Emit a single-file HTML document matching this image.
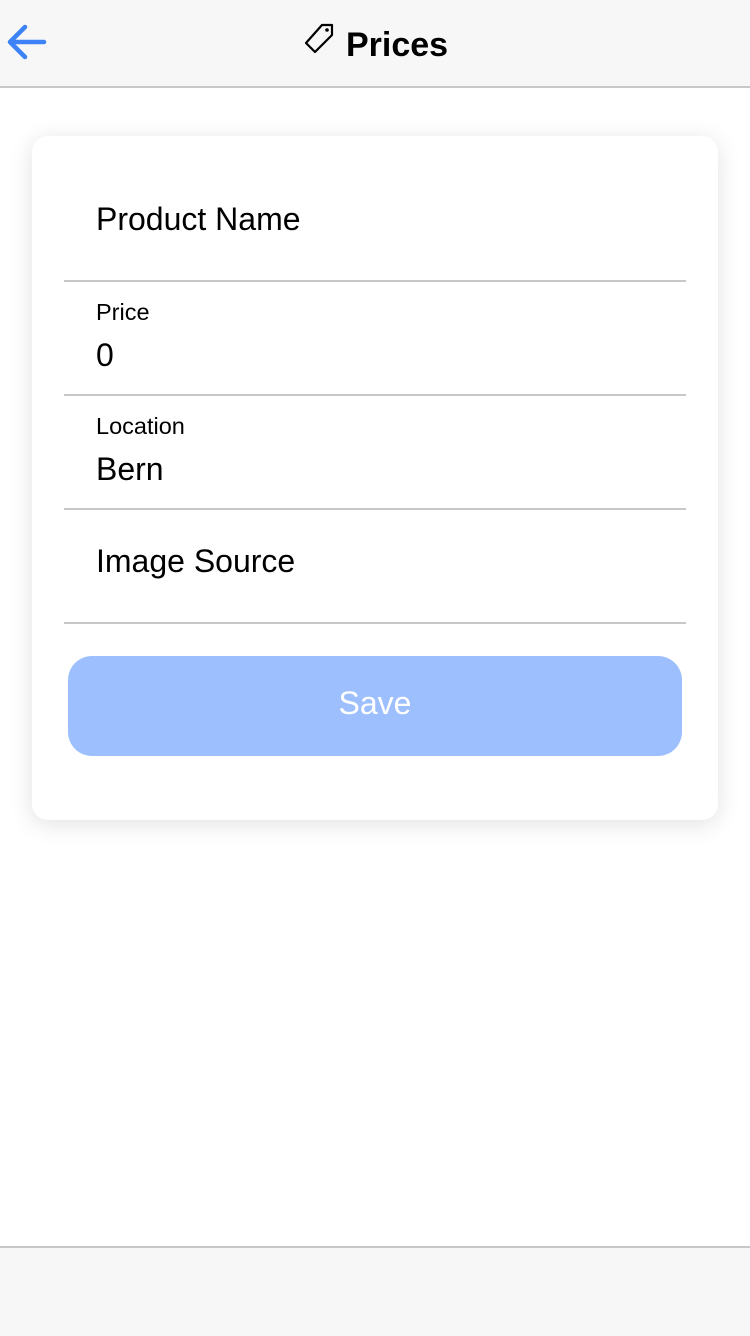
<!DOCTYPE html>
<html><head><style>
body{margin:0;width:750px;height:1334px;background:#fff;font-family:"Liberation Sans",sans-serif;position:relative;overflow:hidden}
.hdr{position:absolute;top:0;left:0;width:750px;height:86px;background:#f7f7f7;border-bottom:2px solid #c8c8c8}
.title{position:absolute;left:346px;top:26px;font-size:34px;font-weight:bold;color:#000}
.card{position:absolute;left:32px;top:136px;width:686px;height:684px;background:#fff;border-radius:16px;box-shadow:0 4px 24px rgba(0,0,0,0.12)}
.f{position:absolute;left:32px;width:622px;border-bottom:2px solid #c8c8c8}
.lbl{position:absolute;left:64px;font-size:23.5px;color:#000}
.val{position:absolute;left:64px;font-size:32px;color:#000}
.btn{position:absolute;left:36px;top:520px;width:614px;height:100px;background:#9dbffe;border-radius:24px;color:#fff;font-size:32px;text-align:center;line-height:94px}
.ftr{position:absolute;top:1246px;left:0;width:750px;height:88px;background:#f7f7f7;border-top:2px solid #c8c8c8}
</style></head><body>
<div class="hdr">
<svg style="position:absolute;left:6px;top:24px" width="42" height="38" viewBox="0 0 42 38"><path d="M38 18H5M19 3L4 18l15 15" fill="none" stroke="#3e82f7" stroke-width="4.5" stroke-linecap="round" stroke-linejoin="round"/></svg>
<svg style="position:absolute;left:302px;top:22px" width="34" height="34" viewBox="0 0 34 34"><path d="M20 3h10v10L13 30 4 21z" fill="none" stroke="#000" stroke-width="2.2" stroke-linejoin="round"/><circle cx="25" cy="8" r="1.8" fill="#000"/></svg>
<div class="title">Prices</div>
</div>
<div class="card">
<div class="val" style="top:65px">Product Name</div>
<div class="f" style="top:144px"></div>
<div class="lbl" style="top:163px">Price</div>
<div class="val" style="top:201px">0</div>
<div class="f" style="top:258px"></div>
<div class="lbl" style="top:277px">Location</div>
<div class="val" style="top:315px">Bern</div>
<div class="f" style="top:372px"></div>
<div class="val" style="top:407px">Image Source</div>
<div class="f" style="top:486px"></div>
<div class="btn">Save</div>
</div>
<div class="ftr"></div>
</body></html>
